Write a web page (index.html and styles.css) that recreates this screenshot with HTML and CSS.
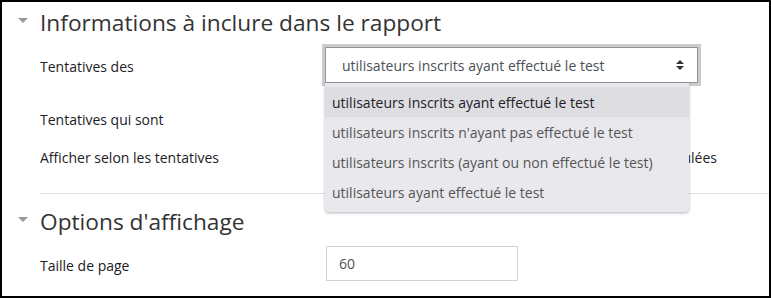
FILE: index.html
```html
<!DOCTYPE html>
<html lang="fr">
<head>
<meta charset="utf-8">
<title>Rapport</title>
<link rel="stylesheet" href="styles.css">
</head>
<body>
<div class="frame">
  <div class="section-head">
    <span class="caret"></span>
    <h3 class="section-title">Informations à inclure dans le rapport</h3>
  </div>
  <div class="form-row row-first">
    <div class="label">Tentatives des</div>
    <div class="field">
      <div class="select">
        <span class="select-value">utilisateurs inscrits ayant effectué le test</span>
        <svg class="select-arrow" width="8" height="10" viewBox="0 0 8 10"><path d="M0 4 L4 0 L8 4 Z M0 6 L8 6 L4 10 Z" fill="#333"/></svg>
        <ul class="dropdown">
          <li class="option active">utilisateurs inscrits ayant effectué le test</li>
          <li class="option">utilisateurs inscrits n'ayant pas effectué le test</li>
          <li class="option">utilisateurs inscrits (ayant ou non effectué le test)</li>
          <li class="option">utilisateurs ayant effectué le test</li>
        </ul>
      </div>
    </div>
  </div>
  <div class="form-row row-second">
    <div class="label">Tentatives qui sont</div>
    <div class="field"></div>
  </div>
  <div class="form-row row-third">
    <div class="label">Afficher selon les tentatives</div>
    <div class="field"><span class="check-text">recalculées</span></div>
  </div>
  <hr class="divider">
  <div class="section-head">
    <span class="caret"></span>
    <h3 class="section-title">Options d'affichage</h3>
  </div>
  <div class="form-row row-first">
    <div class="label">Taille de page</div>
    <div class="field"><div class="text-input">60</div></div>
  </div>
</div>
</body>
</html>
```
FILE: styles.css
```css
* { box-sizing: border-box; }
html, body { margin: 0; padding: 0; background: #fff; }
body {
  font-family: "Open Sans", "Noto Sans", sans-serif;
  font-size: 14px;
  color: #1d2125;
}
.frame {
  width: 771px;
  height: 298px;
  border: 2px solid #000;
  overflow: hidden;
}
.section-head {
  display: flex;
  align-items: flex-start;
  height: 40px;
}
.caret {
  width: 0;
  height: 0;
  margin: 16px 0 0 16px;
  border-left: 5px solid transparent;
  border-right: 5px solid transparent;
  border-top: 5px solid #999;
}
.section-title {
  margin: 0 0 0 12px;
  padding-top: 1px;
  font-weight: 400;
  font-size: 22.7px;
  line-height: 40px;
  color: #333;
  white-space: nowrap;
}
.form-row {
  display: grid;
  grid-template-columns: 322px 1fr;
  height: 36px;
}
.row-first { margin-top: 5px; }
.row-second { margin-top: 17px; height: 38px; }
.row-third { height: 36px; }
.label {
  padding: 2px 0 0 38px;
  line-height: 36px;
  white-space: nowrap;
}
.field { position: relative; }
.select {
  position: relative;
  width: 373px;
  height: 36px;
  margin-left: 1px;
  border: 1px solid #8f959e;
  box-shadow: 0 0 0 3px #ccc;
  background: #fff;
  color: #495057;
  display: flex;
  align-items: center;
}
.select-value {
  padding: 1px 0 0 16px;
  flex: 1;
  white-space: nowrap;
}
.select-arrow { margin-right: 13px; }
.dropdown {
  position: absolute;
  left: -1px;
  top: 35px;
  width: 364px;
  margin: 0;
  padding: 4px 0 5px;
  list-style: none;
  background: #e9e8ed;
  border-radius: 0 0 4px 4px;
  box-shadow: 0 1px 3px rgba(0,0,0,0.3);
  z-index: 2;
}
.option {
  height: 30px;
  padding: 2px 0 0 7px;
  line-height: 28px;
  color: #555;
  white-space: nowrap;
}
.option.active { background: #dedde2; color: #1d2125; }
.check-text {
  display: block;
  width: 393px;
  text-align: right;
  padding-top: 2px;
  line-height: 36px;
  white-space: nowrap;
}
.divider {
  margin: 19px 0 7px 38px;
  border: 0;
  border-top: 1px solid #dee2e6;
  height: 0;
}
.text-input {
  width: 192px;
  height: 35px;
  margin-left: 2px;
  border: 1px solid #ced4da;
  padding: 0 0 0 12px;
  line-height: 34px;
  color: #495057;
}
```
